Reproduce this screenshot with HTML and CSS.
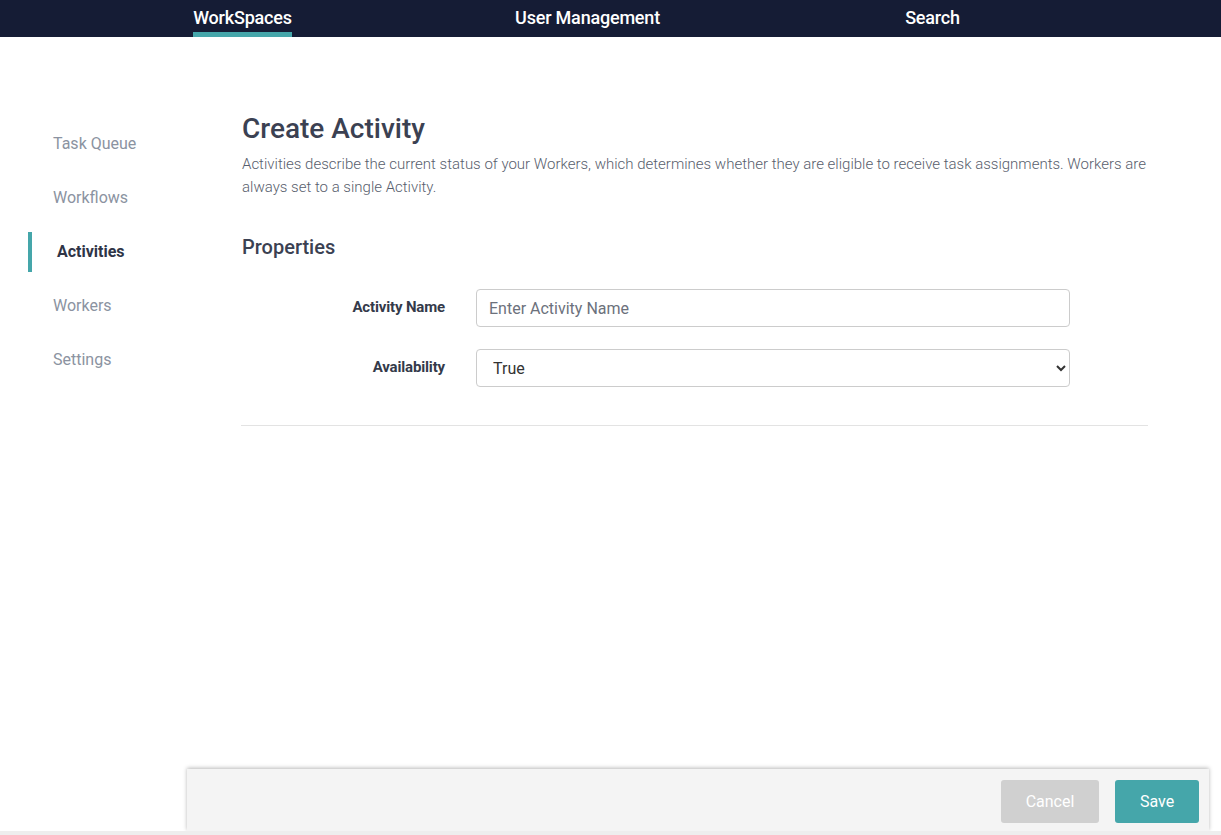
FILE: index.html
```html
<!DOCTYPE html>
<html lang="en">
<head>
<meta charset="utf-8">
<title>Create Activity</title>
<link rel="stylesheet" href="styles.css">
</head>
<body>
<div class="app">
  <nav class="topnav">
    <div class="nav-item"><a class="nav-link active" href="#">WorkSpaces</a></div>
    <div class="nav-item"><a class="nav-link" href="#">User Management</a></div>
    <div class="nav-item"><a class="nav-link" href="#">Search</a></div>
  </nav>
  <div class="body">
    <aside class="sidebar">
      <a class="side-link" href="#">Task Queue</a>
      <a class="side-link" href="#">Workflows</a>
      <a class="side-link active" href="#">Activities</a>
      <a class="side-link" href="#">Workers</a>
      <a class="side-link" href="#">Settings</a>
    </aside>
    <main class="main">
      <section class="content">
        <h1 class="title">Create Activity</h1>
        <p class="desc">Activities describe the current status of your Workers, which determines whether they are eligible to receive task assignments. Workers are always set to a single Activity.</p>
        <h2 class="subtitle">Properties</h2>
        <div class="form">
          <label class="label" for="name">Activity Name</label>
          <input class="field" id="name" type="text" placeholder="Enter Activity Name">
          <label class="label" for="avail">Availability</label>
          <select class="field select" id="avail">
            <option>True</option>
            <option>False</option>
          </select>
        </div>
        <hr class="divider">
      </section>
      <footer class="footer">
        <button class="btn btn-cancel" type="button">Cancel</button>
        <button class="btn btn-save" type="button">Save</button>
      </footer>
    </main>
  </div>
  <div class="bottom-strip"></div>
</div>
</body>
</html>
```
FILE: styles.css
```css
* { box-sizing: border-box; }
html, body { margin: 0; padding: 0; }
body {
  font-family: Roboto, "Liberation Sans", Arial, sans-serif;
  background: #ffffff;
  color: #3b4152;
}
.app {
  display: flex;
  flex-direction: column;
  height: 100vh;
  overflow: hidden;
}
.topnav {
  display: flex;
  height: 37px;
  flex: 0 0 37px;
  background: #151c35;
  padding-left: 70px;
}
.nav-item {
  width: 345px;
  display: flex;
  justify-content: center;
}
.nav-link {
  display: inline-block;
  height: 37px;
  line-height: 36px;
  font-size: 18px;
  font-weight: 500;
  color: #ffffff;
  text-decoration: none;
  letter-spacing: -0.2px;
}
.nav-link.active {
  box-shadow: inset 0 -5px 0 #45a6aa;
}
.body {
  flex: 1;
  display: flex;
  min-height: 0;
}
.sidebar {
  width: 187px;
  flex: 0 0 187px;
  padding: 87px 0 0 28px;
  display: flex;
  flex-direction: column;
  gap: 14px;
}
.side-link {
  display: block;
  height: 40px;
  line-height: 40px;
  padding-left: 25px;
  font-size: 16px;
  color: #8b93a1;
  text-decoration: none;
}
.side-link.active {
  border-left: 4px solid #45a6aa;
  padding-left: 25px;
  font-weight: 700;
  color: #2e3446;
}
.main {
  flex: 1;
  display: flex;
  flex-direction: column;
  min-width: 0;
}
.content {
  flex: 1;
  padding: 75px 73px 0 55px;
}
.title {
  margin: 0;
  font-size: 28px;
  line-height: 33px;
  font-weight: 500;
  color: #3b4152;
}
.desc {
  margin: 8px 0 0;
  font-size: 15px;
  line-height: 23px;
  font-weight: 300;
  color: #585e6d;
}
.subtitle {
  margin: 36px 0 0;
  font-size: 20px;
  line-height: 24px;
  font-weight: 500;
  color: #3b4152;
}
.form {
  margin-top: 30px;
  display: grid;
  grid-template-columns: 203px 594px;
  column-gap: 31px;
  row-gap: 22px;
  align-items: center;
}
.label {
  text-align: right;
  font-size: 15px;
  line-height: 18px;
  font-weight: 700;
  color: #343a4a;
  letter-spacing: -0.15px;
  margin-top: -2px;
}
.field {
  height: 38px;
  width: 100%;
  border: 1px solid #cccccc;
  border-radius: 4px;
  background: #ffffff;
  font-family: Roboto, "Liberation Sans", Arial, sans-serif;
  font-size: 16px;
  color: #333333;
  padding: 0 12px;
  outline: none;
}
.field::placeholder { color: #6c717c; }
.select {
  padding: 0 8px 0 12px;
}
.divider {
  margin: 38px 0 0;
  border: 0;
  border-top: 1px solid #e3e3e3;
  margin-left: -1px;
}
.footer {
  flex: 0 0 62px;
  height: 62px;
  margin-right: 12px;
  background: #f4f4f4;
  box-shadow: 0 -1px 4px rgba(0, 0, 0, 0.28);
  display: flex;
  justify-content: flex-end;
  align-items: flex-start;
  gap: 16px;
  padding: 11px 10px 0 0;
  position: relative;
}
.btn {
  height: 43px;
  border: 0;
  border-radius: 3px;
  color: #ffffff;
  font-family: Roboto, "Liberation Sans", Arial, sans-serif;
  font-size: 16px;
  cursor: pointer;
}
.btn-cancel {
  width: 98px;
  background: #d0d0d0;
}
.btn-save {
  width: 84px;
  background: #45a6aa;
}
.bottom-strip {
  flex: 0 0 4px;
  height: 4px;
  background: #eeeeee;
  position: relative;
  z-index: 1;
}
```
